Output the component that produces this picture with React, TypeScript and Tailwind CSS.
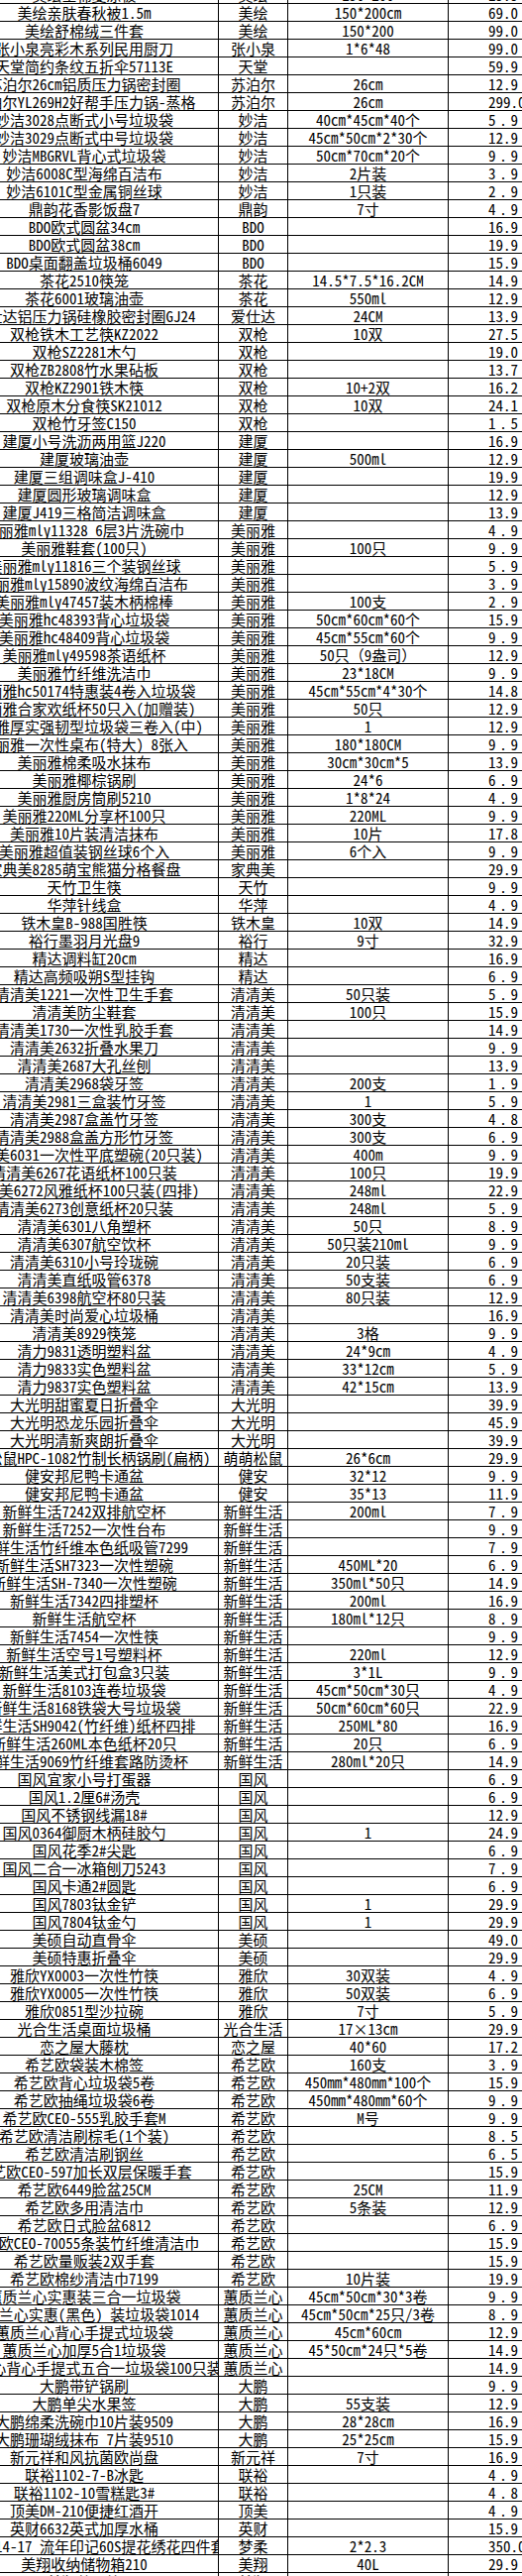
type Row = [string, string, string, string]

// 名称 / 品牌 / 规格 / 价格
const rows: Row[] = [
  ["美绘全棉夏凉被", "美绘", "150*200", "19.9"],
  ["美绘亲肤春秋被1.5m", "美绘", "150*200cm", "69.0"],
  ["美绘舒棉绒三件套", "美绘", "150*200", "99.0"],
  ["张小泉亮彩木系列民用厨刀", "张小泉", "1*6*48", "99.0"],
  ["天堂简约条纹五折伞57113E", "天堂", "", "59.9"],
  ["苏泊尔26cm铝质压力锅密封圈", "苏泊尔", "26cm", "12.9"],
  ["苏泊尔YL269H2好帮手压力锅-蒸格", "苏泊尔", "26cm", "299.0"],
  ["妙洁3028点断式小号垃圾袋", "妙洁", "40cm*45cm*40个", "5.9"],
  ["妙洁3029点断式中号垃圾袋", "妙洁", "45cm*50cm*2*30个", "12.9"],
  ["妙洁MBGRVL背心式垃圾袋", "妙洁", "50cm*70cm*20个", "9.9"],
  ["妙洁6008C型海绵百洁布", "妙洁", "2片装", "3.9"],
  ["妙洁6101C型金属铜丝球", "妙洁", "1只装", "2.9"],
  ["鼎韵花香影饭盘7", "鼎韵", "7寸", "4.9"],
  ["BDO欧式圆盆34cm", "BDO", "", "16.9"],
  ["BDO欧式圆盆38cm", "BDO", "", "19.9"],
  ["BDO桌面翻盖垃圾桶6049", "BDO", "", "15.9"],
  ["茶花2510筷笼", "茶花", "14.5*7.5*16.2CM", "14.9"],
  ["茶花6001玻璃油壶", "茶花", "550ml", "12.9"],
  ["爱仕达铝压力锅硅橡胶密封圈GJ24", "爱仕达", "24CM", "13.9"],
  ["双枪铁木工艺筷KZ2022", "双枪", "10双", "27.5"],
  ["双枪SZ2281木勺", "双枪", "", "19.0"],
  ["双枪ZB2808竹水果砧板", "双枪", "", "13.7"],
  ["双枪KZ2901铁木筷", "双枪", "10+2双", "16.2"],
  ["双枪原木分食筷SK21012", "双枪", "10双", "24.1"],
  ["双枪竹牙签C150", "双枪", "", "1.5"],
  ["建厦小号洗沥两用篮J220", "建厦", "", "16.9"],
  ["建厦玻璃油壶", "建厦", "500ml", "12.9"],
  ["建厦三组调味盒J-410", "建厦", "", "19.9"],
  ["建厦圆形玻璃调味盒", "建厦", "", "12.9"],
  ["建厦J419三格简洁调味盒", "建厦", "", "13.9"],
  ["美丽雅mly11328 6层3片洗碗巾", "美丽雅", "", "4.9"],
  ["美丽雅鞋套(100只)", "美丽雅", "100只", "9.9"],
  ["美丽雅mly11816三个装钢丝球", "美丽雅", "", "5.9"],
  ["美丽雅mly15890波纹海绵百洁布", "美丽雅", "", "3.9"],
  ["美丽雅mly47457装木柄棉棒", "美丽雅", "100支", "2.9"],
  ["美丽雅hc48393背心垃圾袋", "美丽雅", "50cm*60cm*60个", "15.9"],
  ["美丽雅hc48409背心垃圾袋", "美丽雅", "45cm*55cm*60个", "9.9"],
  ["美丽雅mly49598茶语纸杯", "美丽雅", "50只（9盎司）", "12.9"],
  ["美丽雅竹纤维洗洁巾", "美丽雅", "23*18CM", "9.9"],
  ["美丽雅hc50174特惠装4卷入垃圾袋", "美丽雅", "45cm*55cm*4*30个", "14.8"],
  ["美丽雅合家欢纸杯50只入(加赠装)", "美丽雅", "50只", "12.9"],
  ["美丽雅厚实强韧型垃圾袋三卷入(中)", "美丽雅", "1", "12.9"],
  ["美丽雅一次性桌布(特大) 8张入", "美丽雅", "180*180CM", "9.9"],
  ["美丽雅棉柔吸水抹布", "美丽雅", "30cm*30cm*5", "13.9"],
  ["美丽雅椰棕锅刷", "美丽雅", "24*6", "6.9"],
  ["美丽雅厨房筒刷5210", "美丽雅", "1*8*24", "4.9"],
  ["美丽雅220ML分享杯100只", "美丽雅", "220ML", "9.9"],
  ["美丽雅10片装清洁抹布", "美丽雅", "10片", "17.8"],
  ["美丽雅超值装钢丝球6个入", "美丽雅", "6个入", "9.9"],
  ["家典美8285萌宝熊猫分格餐盘", "家典美", "", "29.9"],
  ["天竹卫生筷", "天竹", "", "9.9"],
  ["华萍针线盒", "华萍", "", "4.9"],
  ["铁木皇B-988国胜筷", "铁木皇", "10双", "14.9"],
  ["裕行墨羽月光盘9", "裕行", "9寸", "32.9"],
  ["精达调料缸20cm", "精达", "", "16.9"],
  ["精达高频吸朔S型挂钩", "精达", "", "6.9"],
  ["清清美1221一次性卫生手套", "清清美", "50只装", "5.9"],
  ["清清美防尘鞋套", "清清美", "100只", "15.9"],
  ["清清美1730一次性乳胶手套", "清清美", "", "14.9"],
  ["清清美2632折叠水果刀", "清清美", "", "9.9"],
  ["清清美2687大孔丝刨", "清清美", "", "13.9"],
  ["清清美2968袋牙签", "清清美", "200支", "1.9"],
  ["清清美2981三盒装竹牙签", "清清美", "1", "5.9"],
  ["清清美2987盒盖竹牙签", "清清美", "300支", "4.8"],
  ["清清美2988盒盖方形竹牙签", "清清美", "300支", "6.9"],
  ["清清美6031一次性平底塑碗(20只装)", "清清美", "400m", "9.9"],
  ["清清美6267花语纸杯100只装", "清清美", "100只", "19.9"],
  ["清清美6272风雅纸杯100只装(四排)", "清清美", "248ml", "22.9"],
  ["清清美6273创意纸杯20只装", "清清美", "248ml", "5.9"],
  ["清清美6301八角塑杯", "清清美", "50只", "8.9"],
  ["清清美6307航空饮杯", "清清美", "50只装210ml", "9.9"],
  ["清清美6310小号玲珑碗", "清清美", "20只装", "6.9"],
  ["清清美直纸吸管6378", "清清美", "50支装", "6.9"],
  ["清清美6398航空杯80只装", "清清美", "80只装", "12.9"],
  ["清清美时尚爱心垃圾桶", "清清美", "", "16.9"],
  ["清清美8929筷笼", "清清美", "3格", "9.9"],
  ["清力9831透明塑料盆", "清清美", "24*9cm", "4.9"],
  ["清力9833实色塑料盆", "清清美", "33*12cm", "5.9"],
  ["清力9837实色塑料盆", "清清美", "42*15cm", "13.9"],
  ["大光明甜蜜夏日折叠伞", "大光明", "", "39.9"],
  ["大光明恐龙乐园折叠伞", "大光明", "", "45.9"],
  ["大光明清新爽朗折叠伞", "大光明", "", "39.9"],
  ["萌萌松鼠HPC-1082竹制长柄锅刷(扁柄)", "萌萌松鼠", "26*6cm", "29.9"],
  ["健安邦尼鸭卡通盆", "健安", "32*12", "9.9"],
  ["健安邦尼鸭卡通盆", "健安", "35*13", "11.9"],
  ["新鲜生活7242双排航空杯", "新鲜生活", "200ml", "7.9"],
  ["新鲜生活7252一次性台布", "新鲜生活", "", "9.9"],
  ["新鲜生活竹纤维本色纸吸管7299", "新鲜生活", "", "7.9"],
  ["新鲜生活SH7323一次性塑碗", "新鲜生活", "450ML*20", "6.9"],
  ["新鲜生活SH-7340一次性塑碗", "新鲜生活", "350ml*50只", "14.9"],
  ["新鲜生活7342四排塑杯", "新鲜生活", "200ml", "16.9"],
  ["新鲜生活航空杯", "新鲜生活", "180ml*12只", "8.9"],
  ["新鲜生活7454一次性筷", "新鲜生活", "", "9.9"],
  ["新鲜生活空号1号塑料杯", "新鲜生活", "220ml", "12.9"],
  ["新鲜生活美式打包盒3只装", "新鲜生活", "3*1L", "9.9"],
  ["新鲜生活8103连卷垃圾袋", "新鲜生活", "45cm*50cm*30只", "4.9"],
  ["新鲜生活8168铁袋大号垃圾袋", "新鲜生活", "50cm*60cm*60只", "22.9"],
  ["新鲜生活SH9042(竹纤维)纸杯四排", "新鲜生活", "250ML*80", "16.9"],
  ["新鲜生活260ML本色纸杯20只", "新鲜生活", "20只", "6.9"],
  ["新鲜生活9069竹纤维套路防烫杯", "新鲜生活", "280ml*20只", "14.9"],
  ["国风宜家小号打蛋器", "国风", "", "6.9"],
  ["国风1.2厘6#汤壳", "国风", "", "6.9"],
  ["国风不锈钢线漏18#", "国风", "", "12.9"],
  ["国风0364御厨木柄硅胶勺", "国风", "1", "24.9"],
  ["国风花季2#尖匙", "国风", "", "6.9"],
  ["国风二合一冰箱刨刀5243", "国风", "", "7.9"],
  ["国风卡通2#圆匙", "国风", "", "6.9"],
  ["国风7803钛金铲", "国风", "1", "29.9"],
  ["国风7804钛金勺", "国风", "1", "29.9"],
  ["美硕自动直骨伞", "美硕", "", "49.0"],
  ["美硕特惠折叠伞", "美硕", "", "29.9"],
  ["雅欣YX0003一次性竹筷", "雅欣", "30双装", "4.9"],
  ["雅欣YX0005一次性竹筷", "雅欣", "50双装", "6.9"],
  ["雅欣0851型沙拉碗", "雅欣", "7寸", "5.9"],
  ["光合生活桌面垃圾桶", "光合生活", "17×13cm", "29.9"],
  ["恋之屋大藤枕", "恋之屋", "40*60", "17.2"],
  ["希艺欧袋装木棉签", "希艺欧", "160支", "3.9"],
  ["希艺欧背心垃圾袋5卷", "希艺欧", "450mm*480mm*100个", "15.9"],
  ["希艺欧抽绳垃圾袋6卷", "希艺欧", "450mm*480mm*60个", "9.9"],
  ["希艺欧CEO-555乳胶手套M", "希艺欧", "M号", "9.9"],
  ["希艺欧清洁刷棕毛(1个装)", "希艺欧", "", "8.5"],
  ["希艺欧清洁刷钢丝", "希艺欧", "", "6.5"],
  ["希艺欧CEO-597加长双层保暖手套", "希艺欧", "", "15.9"],
  ["希艺欧6449脸盆25CM", "希艺欧", "25CM", "11.9"],
  ["希艺欧多用清洁巾", "希艺欧", "5条装", "12.9"],
  ["希艺欧日式脸盆6812", "希艺欧", "", "6.9"],
  ["希艺欧CEO-70055条装竹纤维清洁巾", "希艺欧", "", "15.9"],
  ["希艺欧量贩装2双手套", "希艺欧", "", "15.9"],
  ["希艺欧棉纱清洁巾7199", "希艺欧", "10片装", "19.9"],
  ["蕙质兰心实惠装三合一垃圾袋", "蕙质兰心", "45cm*50cm*30*3卷", "9.9"],
  ["蕙质兰心实惠(黑色) 装垃圾袋1014", "蕙质兰心", "45cm*50cm*25只/3卷", "8.9"],
  ["蕙质兰心背心手提式垃圾袋", "蕙质兰心", "45cm*60cm", "12.9"],
  ["蕙质兰心加厚5合1垃圾袋", "蕙质兰心", "45*50cm*24只*5卷", "14.9"],
  ["蕙质兰心背心手提式五合一垃圾袋100只装", "蕙质兰心", "", "14.9"],
  ["大鹏带铲锅刷", "大鹏", "", "9.9"],
  ["大鹏单尖水果签", "大鹏", "55支装", "12.9"],
  ["大鹏绵柔洗碗巾10片装9509", "大鹏", "28*28cm", "16.9"],
  ["大鹏珊瑚绒抹布 7片装9510", "大鹏", "25*25cm", "15.9"],
  ["新元祥和风抗菌欧尚盘", "新元祥", "7寸", "16.9"],
  ["联裕1102-7-B冰匙", "联裕", "", "4.9"],
  ["联裕1102-10雪糕匙3#", "联裕", "", "4.8"],
  ["顶美DM-210便捷红酒开", "顶美", "", "4.9"],
  ["英财6632英式加厚水桶", "英财", "", "15.9"],
  ["梦柔M2014-17 流年印记60S提花绣花四件套", "梦柔", "2*2.3", "350.0"],
  ["美翔收纳储物箱210", "美翔", "40L", "29.9"],
  ["美翔整理箱", "美翔", "", "39.9"],
]

function SheetRow({ row, first }: { row: Row; first: boolean }) {
  const [name, brand, spec, price] = row
  return (
    <div
      className={`grid h-[18px] grid-cols-[271px_70px_162px_120px] border-b border-black ${first ? "-mt-[14px]" : ""}`}
    >
      <div className="flex items-center justify-center overflow-hidden whitespace-nowrap border-r border-black">
        {name}
      </div>
      <div className="flex items-center justify-center overflow-hidden whitespace-nowrap border-r border-black">
        {brand}
      </div>
      <div className="flex items-center justify-center overflow-hidden whitespace-nowrap border-r border-black">
        {spec}
      </div>
      <div className="flex items-center whitespace-nowrap pl-[40px]">
        <span className={price.length === 3 ? "tracking-[3.75px]" : ""}>{price}</span>
      </div>
    </div>
  )
}

export default function App() {
  return (
    <div className="h-[2599px] w-[527px] overflow-hidden bg-white text-black">
      <div className="-ml-[50px] w-[623px] font-['Noto_Sans_Mono_CJK_SC','Noto_Sans_CJK_SC',sans-serif] text-[15px] leading-[17px]">
        {rows.map((row, i) => (
          <SheetRow key={i} row={row} first={i === 0} />
        ))}
      </div>
    </div>
  )
}
